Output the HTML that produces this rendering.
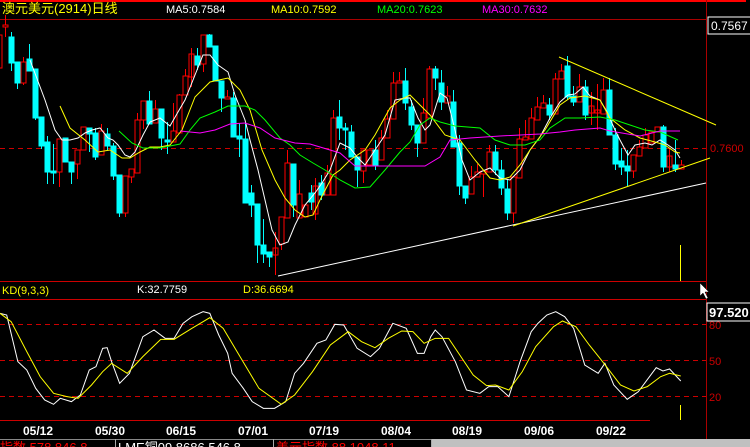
<!DOCTYPE html>
<html><head><meta charset="utf-8"><style>
html,body{margin:0;padding:0;background:#000;width:750px;height:447px;overflow:hidden}
svg{display:block}
text{font-family:"Liberation Sans","Noto Sans CJK SC",sans-serif}
</style></head><body>
<svg width="750" height="447" viewBox="0 0 750 447" xmlns="http://www.w3.org/2000/svg">
<rect width="750" height="447" fill="#000"/>
<rect x="0" y="0" width="746" height="2" fill="#f00"/>
<line x1="0" y1="19.5" x2="706" y2="19.5" stroke="#a00" stroke-width="1"/>
<line x1="706.5" y1="0" x2="706.5" y2="447" stroke="#a00"/>
<text x="2" y="13" font-size="13" fill="#ff0">澳元美元(2914)日线</text>
<text x="166" y="13" font-size="11" fill="#fff">MA5:0.7584</text>
<text x="271" y="13" font-size="11" fill="#ff0">MA10:0.7592</text>
<text x="377" y="13" font-size="11" fill="#0f0">MA20:0.7623</text>
<text x="482" y="13" font-size="11" fill="#f0f">MA30:0.7632</text>
<rect x="708" y="17" width="43" height="17" fill="#000" stroke="#fff"/>
<text x="711" y="30" font-size="12" fill="#fff">0.7567</text>
<line x1="0" y1="148.5" x2="706" y2="148.5" stroke="#c00" stroke-dasharray="5,4"/>
<text x="710" y="152" font-size="11" fill="#c00">0.7600</text>
<g stroke-width="1">
<g stroke="#f00" fill="#000">
<rect x="-3" y="35" width="5" height="33"/><line x1="5.5" y1="15" x2="5.5" y2="37"/><rect x="3" y="25" width="5" height="2"/>
<rect x="21" y="62" width="5" height="21"/><line x1="23.5" y1="57" x2="23.5" y2="62"/><line x1="23.5" y1="83" x2="23.5" y2="85"/>
<rect x="57" y="139" width="5" height="33"/><line x1="59.5" y1="172" x2="59.5" y2="187"/>
<rect x="75" y="150" width="5" height="14"/><line x1="77.5" y1="164" x2="77.5" y2="179"/>
<rect x="81" y="127" width="5" height="23"/>
<rect x="99" y="131" width="5" height="24"/><line x1="101.5" y1="124" x2="101.5" y2="131"/>
<rect x="123" y="176" width="5" height="37"/><line x1="125.5" y1="213" x2="125.5" y2="217"/>
<rect x="129" y="169" width="5" height="8"/><line x1="131.5" y1="177" x2="131.5" y2="183"/>
<rect x="135" y="120" width="5" height="53"/><line x1="137.5" y1="113" x2="137.5" y2="120"/>
<rect x="141" y="101" width="5" height="19"/><line x1="143.5" y1="120" x2="143.5" y2="129"/>
<rect x="153" y="109" width="5" height="14"/><line x1="155.5" y1="100" x2="155.5" y2="109"/>
<rect x="171" y="131" width="5" height="11"/><line x1="173.5" y1="103" x2="173.5" y2="131"/>
<rect x="177" y="95" width="5" height="38"/><line x1="179.5" y1="94" x2="179.5" y2="95"/>
<rect x="183" y="76" width="5" height="19"/><line x1="185.5" y1="69" x2="185.5" y2="76"/>
<rect x="189" y="54" width="5" height="23"/><line x1="191.5" y1="48" x2="191.5" y2="87"/>
<rect x="201" y="35" width="5" height="29"/><line x1="203.5" y1="64" x2="203.5" y2="72"/>
<rect x="225" y="97" width="5" height="2"/><line x1="227.5" y1="90" x2="227.5" y2="97"/>
<rect x="273" y="248" width="5" height="7"/><line x1="275.5" y1="232" x2="275.5" y2="275"/>
<rect x="279" y="217" width="5" height="27"/><line x1="281.5" y1="244" x2="281.5" y2="250"/>
<rect x="285" y="163" width="5" height="55"/><line x1="287.5" y1="150" x2="287.5" y2="163"/>
<rect x="297" y="194" width="5" height="24"/><line x1="299.5" y1="180" x2="299.5" y2="194"/>
<rect x="303" y="205" width="5" height="12"/>
<rect x="313" y="186" width="5" height="28"/><line x1="315.5" y1="178" x2="315.5" y2="220"/>
<rect x="325" y="173" width="5" height="22"/><line x1="327.5" y1="165" x2="327.5" y2="173"/>
<rect x="331" y="118" width="5" height="77"/><line x1="333.5" y1="110" x2="333.5" y2="118"/>
<rect x="361" y="150" width="5" height="21"/><line x1="363.5" y1="171" x2="363.5" y2="183"/>
<rect x="367" y="150" width="5" height="15"/>
<rect x="379" y="138" width="5" height="22"/><line x1="381.5" y1="130" x2="381.5" y2="138"/>
<rect x="385" y="119" width="5" height="19"/><line x1="387.5" y1="110" x2="387.5" y2="119"/>
<rect x="391" y="83" width="5" height="36"/><line x1="393.5" y1="72" x2="393.5" y2="83"/>
<rect x="397" y="81" width="5" height="2"/><line x1="399.5" y1="72" x2="399.5" y2="81"/>
<rect x="421" y="113" width="5" height="30"/><line x1="423.5" y1="98" x2="423.5" y2="113"/>
<rect x="427" y="69" width="5" height="49"/><line x1="429.5" y1="66" x2="429.5" y2="69"/>
<rect x="445" y="96" width="5" height="7"/><line x1="447.5" y1="86" x2="447.5" y2="96"/>
<rect x="469" y="177" width="5" height="17"/><line x1="471.5" y1="166" x2="471.5" y2="177"/>
<rect x="475" y="172" width="5" height="5"/><line x1="477.5" y1="164" x2="477.5" y2="172"/>
<rect x="481" y="171" width="5" height="3"/><line x1="483.5" y1="174" x2="483.5" y2="197"/>
<rect x="487" y="152" width="5" height="20"/><line x1="489.5" y1="145" x2="489.5" y2="152"/>
<rect x="511" y="177" width="5" height="36"/><line x1="513.5" y1="213" x2="513.5" y2="223"/>
<rect x="517" y="139" width="5" height="39"/><line x1="519.5" y1="128" x2="519.5" y2="139"/>
<rect x="523" y="137" width="5" height="3"/><line x1="525.5" y1="120" x2="525.5" y2="137"/>
<rect x="529" y="118" width="5" height="21"/><line x1="531.5" y1="108" x2="531.5" y2="118"/>
<rect x="535" y="107" width="5" height="13"/><line x1="537.5" y1="97" x2="537.5" y2="107"/>
<rect x="541" y="103" width="5" height="5"/><line x1="543.5" y1="95" x2="543.5" y2="103"/>
<rect x="553" y="79" width="5" height="35"/><line x1="555.5" y1="73" x2="555.5" y2="79"/>
<rect x="559" y="71" width="5" height="8"/><line x1="561.5" y1="64" x2="561.5" y2="71"/>
<rect x="577" y="87" width="5" height="15"/><line x1="579.5" y1="74" x2="579.5" y2="87"/>
<rect x="589" y="106" width="5" height="7"/><line x1="591.5" y1="92" x2="591.5" y2="125"/>
<rect x="595" y="110" width="5" height="3"/><line x1="597.5" y1="84" x2="597.5" y2="130"/>
<rect x="601" y="90" width="5" height="24"/><line x1="603.5" y1="78" x2="603.5" y2="90"/>
<rect x="631" y="155" width="5" height="16"/><line x1="633.5" y1="171" x2="633.5" y2="178"/>
<rect x="637" y="147" width="5" height="9"/><line x1="639.5" y1="140" x2="639.5" y2="147"/>
<rect x="643" y="135" width="5" height="13"/><line x1="645.5" y1="128" x2="645.5" y2="135"/>
<rect x="649" y="132" width="5" height="11"/>
<rect x="655" y="127" width="5" height="5"/>
<rect x="667" y="156" width="5" height="11"/><line x1="669.5" y1="148" x2="669.5" y2="172"/>
<rect x="679" y="165" width="5" height="4"/><line x1="681.5" y1="160" x2="681.5" y2="165"/>
</g>
<g fill="#0ff" stroke="#0ff">
<rect x="9" y="37" width="5" height="26"/><line x1="11.5" y1="32" x2="11.5" y2="71"/>
<rect x="15" y="62" width="5" height="21"/><line x1="17.5" y1="83" x2="17.5" y2="89"/>
<rect x="27" y="59" width="5" height="12"/><line x1="29.5" y1="44" x2="29.5" y2="59"/>
<rect x="33" y="69" width="5" height="49"/><line x1="35.5" y1="118" x2="35.5" y2="120"/>
<rect x="39" y="117" width="5" height="29"/><line x1="41.5" y1="146" x2="41.5" y2="149"/>
<rect x="45" y="142" width="5" height="30"/><line x1="47.5" y1="136" x2="47.5" y2="184"/>
<rect x="51" y="171" width="5" height="2"/><line x1="53.5" y1="144" x2="53.5" y2="184"/>
<rect x="63" y="138" width="5" height="24"/>
<rect x="69" y="162" width="5" height="10"/><line x1="71.5" y1="172" x2="71.5" y2="184"/>
<rect x="87" y="128" width="5" height="6"/><line x1="89.5" y1="134" x2="89.5" y2="152"/>
<rect x="93" y="133" width="5" height="24"/><line x1="95.5" y1="128" x2="95.5" y2="160"/>
<rect x="105" y="134" width="5" height="12"/><line x1="107.5" y1="128" x2="107.5" y2="150"/>
<rect x="111" y="146" width="5" height="30"/><line x1="113.5" y1="143" x2="113.5" y2="180"/>
<rect x="117" y="175" width="5" height="38"/><line x1="119.5" y1="213" x2="119.5" y2="217"/>
<rect x="147" y="101" width="5" height="23"/><line x1="149.5" y1="91" x2="149.5" y2="101"/>
<rect x="159" y="109" width="5" height="29"/><line x1="161.5" y1="138" x2="161.5" y2="150"/>
<rect x="165" y="140" width="5" height="2"/><line x1="167.5" y1="122" x2="167.5" y2="154"/>
<rect x="195" y="56" width="5" height="9"/><line x1="197.5" y1="48" x2="197.5" y2="70"/>
<rect x="207" y="35" width="5" height="12"/><line x1="209.5" y1="34" x2="209.5" y2="35"/>
<rect x="213" y="46" width="5" height="35"/>
<rect x="219" y="81" width="5" height="17"/><line x1="221.5" y1="98" x2="221.5" y2="112"/>
<rect x="231" y="98" width="5" height="39"/><line x1="233.5" y1="92" x2="233.5" y2="98"/>
<rect x="237" y="136" width="5" height="3"/><line x1="239.5" y1="123" x2="239.5" y2="157"/>
<rect x="243" y="139" width="5" height="64"/><line x1="245.5" y1="123" x2="245.5" y2="139"/>
<rect x="249" y="193" width="5" height="12"/><line x1="251.5" y1="185" x2="251.5" y2="217"/>
<rect x="255" y="204" width="5" height="41"/><line x1="257.5" y1="245" x2="257.5" y2="263"/>
<rect x="261" y="245" width="5" height="9"/><line x1="263.5" y1="219" x2="263.5" y2="263"/>
<rect x="267" y="252" width="5" height="5"/><line x1="269.5" y1="257" x2="269.5" y2="267"/>
<rect x="291" y="164" width="5" height="41"/><line x1="293.5" y1="205" x2="293.5" y2="217"/>
<rect x="309" y="193" width="5" height="9"/><line x1="311.5" y1="185" x2="311.5" y2="210"/>
<rect x="319" y="183" width="5" height="12"/><line x1="321.5" y1="175" x2="321.5" y2="200"/>
<rect x="337" y="117" width="5" height="11"/><line x1="339.5" y1="100" x2="339.5" y2="140"/>
<rect x="343" y="128" width="5" height="2"/><line x1="345.5" y1="123" x2="345.5" y2="150"/>
<rect x="349" y="132" width="5" height="25"/><line x1="351.5" y1="125" x2="351.5" y2="132"/>
<rect x="355" y="157" width="5" height="13"/><line x1="357.5" y1="170" x2="357.5" y2="187"/>
<rect x="373" y="150" width="5" height="15"/><line x1="375.5" y1="140" x2="375.5" y2="170"/>
<rect x="403" y="81" width="5" height="22"/><line x1="405.5" y1="68" x2="405.5" y2="110"/>
<rect x="409" y="107" width="5" height="18"/><line x1="411.5" y1="100" x2="411.5" y2="130"/>
<rect x="415" y="125" width="5" height="18"/><line x1="417.5" y1="143" x2="417.5" y2="157"/>
<rect x="433" y="69" width="5" height="9"/><line x1="435.5" y1="66" x2="435.5" y2="90"/>
<rect x="439" y="83" width="5" height="19"/><line x1="441.5" y1="70" x2="441.5" y2="110"/>
<rect x="451" y="102" width="5" height="45"/><line x1="453.5" y1="90" x2="453.5" y2="102"/>
<rect x="457" y="143" width="5" height="43"/><line x1="459.5" y1="135" x2="459.5" y2="195"/>
<rect x="463" y="186" width="5" height="12"/><line x1="465.5" y1="198" x2="465.5" y2="204"/>
<rect x="493" y="152" width="5" height="18"/><line x1="495.5" y1="145" x2="495.5" y2="175"/>
<rect x="499" y="170" width="5" height="18"/><line x1="501.5" y1="160" x2="501.5" y2="195"/>
<rect x="505" y="189" width="5" height="24"/><line x1="507.5" y1="180" x2="507.5" y2="220"/>
<rect x="547" y="105" width="5" height="10"/><line x1="549.5" y1="98" x2="549.5" y2="120"/>
<rect x="565" y="66" width="5" height="31"/><line x1="567.5" y1="56" x2="567.5" y2="100"/>
<rect x="571" y="96" width="5" height="6"/><line x1="573.5" y1="86" x2="573.5" y2="106"/>
<rect x="583" y="87" width="5" height="28"/><line x1="585.5" y1="80" x2="585.5" y2="120"/>
<rect x="607" y="90" width="5" height="45"/><line x1="609.5" y1="78" x2="609.5" y2="90"/>
<rect x="613" y="135" width="5" height="29"/><line x1="615.5" y1="128" x2="615.5" y2="170"/>
<rect x="619" y="161" width="5" height="6"/><line x1="621.5" y1="148" x2="621.5" y2="175"/>
<rect x="625" y="166" width="5" height="5"/><line x1="627.5" y1="150" x2="627.5" y2="187"/>
<rect x="661" y="127" width="5" height="40"/><line x1="663.5" y1="125" x2="663.5" y2="172"/>
<rect x="673" y="165" width="5" height="4"/><line x1="675.5" y1="140" x2="675.5" y2="172"/>
</g>
</g>
<g fill="none" stroke-width="1">
<polyline stroke="#fff" points="30,60 45,100 55,130 62,140 70,140 78,138 85,133 92,130 100,128 108,138 113,140 118,145 125,155 130,157 135,152 143,135 150,122 160,118 170,126 178,112 185,100 195,75 203,55 210,55 218,65 228,72 235,95 245,120 250,140 258,170 265,200 272,230 280,245 288,242 295,225 305,205 315,193 322,183 330,170 340,143 350,148 358,158 365,165 375,150 385,135 395,100 405,98 410,98 418,118 425,130 430,125 440,93 447,98 455,130 462,160 470,180 480,172 490,168 500,178 510,180 520,170 530,150 540,137 550,118 560,102 568,95 575,94 583,87 590,96 600,100 607,112 615,130 620,140 628,155 635,145 645,143 652,145 660,140 668,145 675,150 680,158"/>
<polyline stroke="#ff0" points="60,106 70,128 85,140 98,152 110,150 122,158 130,158 140,152 150,147 160,147 170,145 182,130 195,97 210,82 228,78 240,90 250,110 262,150 275,180 285,198 295,210 305,217 313,215 320,200 333,175 340,170 350,160 365,150 375,135 390,108 400,100 410,95 420,105 430,115 445,135 460,140 475,160 490,178 500,180 510,177 520,165 530,150 545,130 560,105 570,98 585,96 600,100 610,118 625,130 640,138 655,142 665,145 675,152 680,153"/>
<polyline stroke="#0f0" points="119,131 132,143 143,148 160,148 170,146 180,144 190,130 200,118 215,112 228,106 245,106 255,110 265,120 280,138 290,145 300,155 313,163 325,170 340,180 355,188 370,187 385,170 400,152 410,142 420,125 430,118 440,122 455,126 480,128 495,140 510,145 525,145 540,140 550,128 565,118 580,118 600,117 615,120 630,125 645,130 660,132 678,140"/>
<polyline stroke="#f0f" points="180,131 200,133 215,130 230,124 245,123 260,128 275,138 295,143 310,144 340,153 355,166 425,166 440,157 450,140 470,138 500,136 540,134 560,132 575,130 600,128 610,131 640,136 660,131 680,131"/>
<line x1="278" y1="276" x2="706" y2="183" stroke="#fff"/>
<line x1="513" y1="226" x2="710" y2="158" stroke="#ff0"/>
<line x1="559" y1="57" x2="716" y2="125" stroke="#ff0"/>
</g>
<line x1="680.5" y1="245" x2="680.5" y2="281" stroke="#ff0"/>
<line x1="0" y1="281.5" x2="706" y2="281.5" stroke="#c00"/>
<line x1="0" y1="299.5" x2="706" y2="299.5" stroke="#c00"/>
<text x="2" y="294" font-size="11" fill="#ff0">KD(9,3,3)</text>
<text x="137" y="293" font-size="11" fill="#fff">K:32.7759</text>
<text x="243" y="293" font-size="11" fill="#ff0">D:36.6694</text>
<path d="M700 283 L700 296 L703 293 L706 299 L708 298 L705 292 L709 292 Z" fill="#fff" stroke="#000" stroke-width="0.5"/>
<g stroke="#c00" stroke-dasharray="5,4">
<line x1="0" y1="324.5" x2="706" y2="324.5"/>
<line x1="0" y1="360.5" x2="706" y2="360.5"/>
<line x1="0" y1="396.5" x2="706" y2="396.5"/>
</g>
<text x="709" y="329" font-size="11" fill="#c00">80</text>
<text x="709" y="365" font-size="11" fill="#c00">50</text>
<text x="709" y="401" font-size="11" fill="#c00">20</text>
<rect x="707" y="303" width="44" height="18" fill="#000" stroke="#fff"/>
<text x="709" y="317" font-size="13" font-weight="bold" fill="#fff">97.520</text>
<g transform="translate(0,295) scale(0.4464,0.3333)" fill="none">
<polyline vector-effect="non-scaling-stroke" stroke="#fff" points="0,55 15,60 40,200 60,225 80,280 100,315 120,328 135,310 160,320 180,300 200,225 215,215 230,160 240,158 250,200 268,265 290,235 320,125 345,105 370,130 390,130 410,85 430,65 455,50 470,55 490,120 510,175 520,235 545,280 565,320 590,340 615,340 640,320 660,235 680,205 710,145 730,135 750,88 770,90 800,160 830,185 850,160 880,85 910,100 935,175 950,175 965,125 975,105 990,125 1020,200 1045,285 1075,295 1095,275 1115,275 1140,305 1165,200 1190,110 1205,85 1225,60 1245,50 1265,65 1285,100 1310,210 1340,235 1355,205 1375,270 1405,313 1430,290 1470,218 1485,228 1500,222 1525,258"/>
<polyline vector-effect="non-scaling-stroke" stroke="#ff0" points="0,55 25,80 60,170 90,245 120,295 150,305 175,310 205,270 230,230 250,205 285,235 320,185 360,133 390,133 430,100 470,68 500,100 540,190 580,280 630,328 660,300 700,230 740,150 780,110 810,140 840,158 870,130 900,108 925,110 950,145 975,130 1005,130 1030,180 1060,240 1090,272 1110,270 1140,285 1170,230 1200,155 1240,95 1260,78 1290,95 1320,150 1350,200 1390,270 1420,288 1450,275 1480,245 1500,235 1525,243"/>
</g>
<line x1="680.5" y1="405" x2="680.5" y2="420" stroke="#ff0"/>
<line x1="0" y1="420.5" x2="650" y2="420.5" stroke="#c00"/>
<g font-family="Liberation Mono,monospace" font-size="12" font-weight="bold" fill="#fff" text-anchor="middle">
<text x="38" y="435">05/12</text><text x="110" y="435">05/30</text><text x="181" y="435">06/15</text>
<text x="253" y="435">07/01</text><text x="324" y="435">07/19</text><text x="396" y="435">08/04</text>
<text x="467" y="435">08/19</text><text x="539" y="435">09/06</text><text x="611" y="435">09/22</text>
</g>
<rect x="0" y="439" width="750" height="8" fill="#000"/>
<rect x="432" y="439" width="318" height="8" fill="#c0c0c0"/>
<line x1="0" y1="439.5" x2="432" y2="439.5" stroke="#888"/>
<line x1="115.5" y1="439" x2="115.5" y2="447" stroke="#aaa"/>
<line x1="273.5" y1="439" x2="273.5" y2="447" stroke="#aaa"/>
<line x1="431.5" y1="439" x2="431.5" y2="447" stroke="#aaa"/>
<text x="0" y="452" font-size="13" fill="#f00">指数 578 846.8</text>
<text x="118" y="452" font-size="13" fill="#fff">LME铜09 8686 546.8</text>
<text x="276" y="452" font-size="13" fill="#f00">美元指数 88 1048.11</text>
</svg>
</body></html>
